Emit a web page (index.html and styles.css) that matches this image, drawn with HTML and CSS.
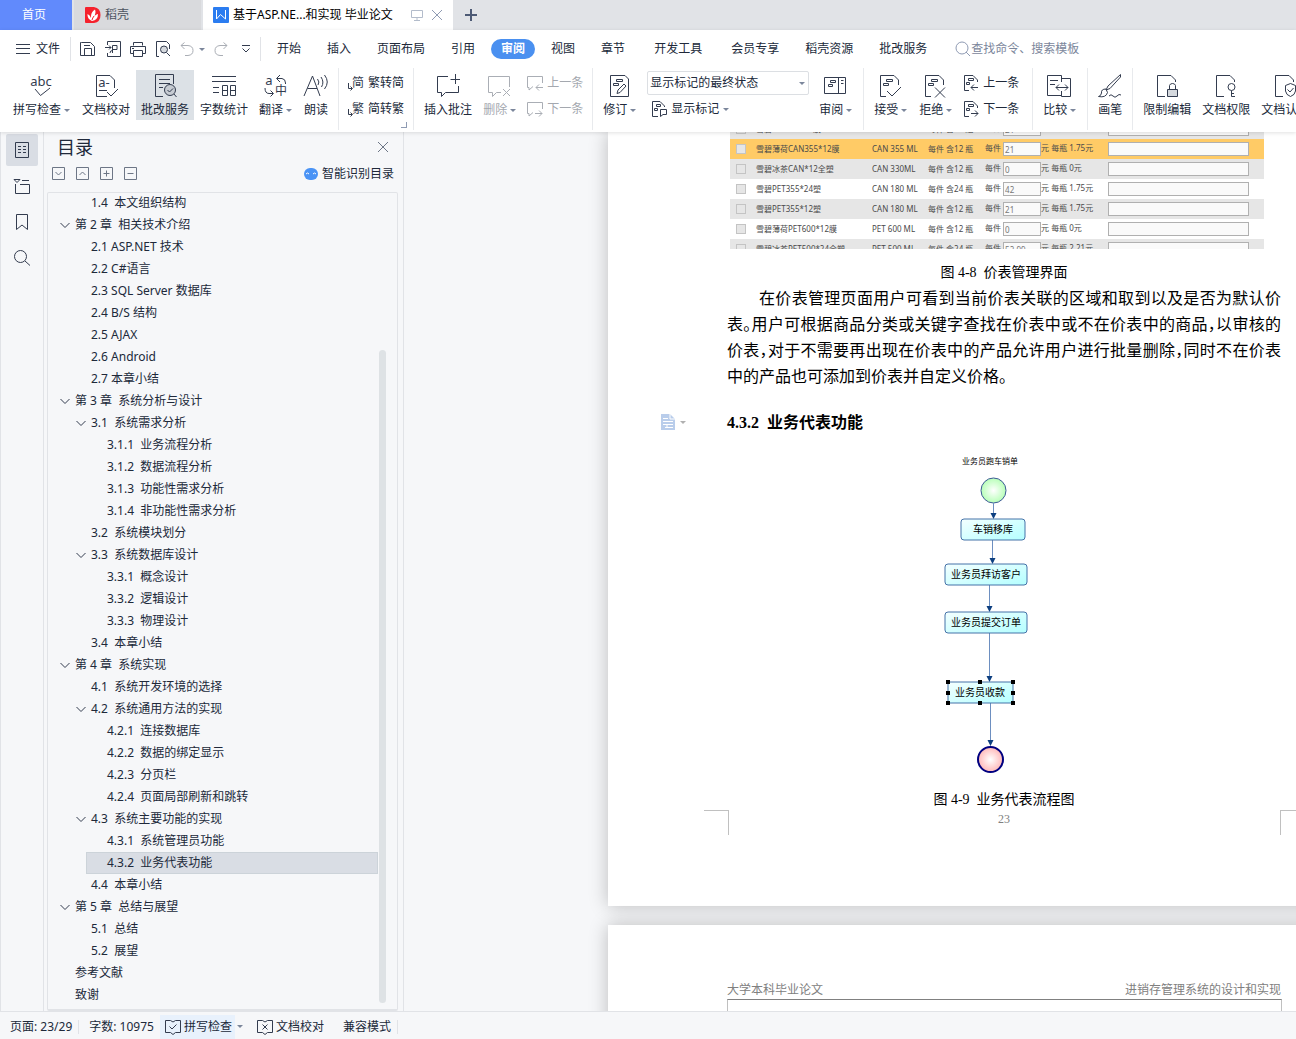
FILE: index.html
```html
<!DOCTYPE html>
<html lang="zh-CN">

<head>
  <meta charset="UTF-8">
  <meta name="viewport" content="width=device-width, initial-scale=1.0">
  <title>基于ASP.NET进销存管理系统的设计和实现 毕业论文</title>
  <link rel="stylesheet" href="styles.css">
</head>

<body>
  <!-- Shared icon shapes -->
  <svg class="symbols" width="0" height="0" aria-hidden="true">
    <symbol id="i-page" viewBox="0 0 24 24">
      <path d="M8 22.500H2.500V1.500H16L20.500 6V11" />
      <path d="M8.500 5.500h6v2h-6zM5.500 9.500h5v2h-5z" />
    </symbol>
    <symbol id="i-lockpage" viewBox="0 0 24 24">
      <path d="M10 22.500H2.500V1.500H16L20.500 6V8" />
    </symbol>
    <symbol id="i-prev" viewBox="0 0 16 16">
      <path d="M6 15.500H1.500V.500H10L14.500 5V7M5.500 3.500h5v2h-5zM3.500 7.500h3v2h-3zM15 12.500H8M11 9.500L8 12.500L11 15.500" />
    </symbol>
    <symbol id="i-next" viewBox="0 0 16 16">
      <path d="M6 15.500H1.500V.500H10L14.500 5V7M5.500 3.500h5v2h-5zM3.500 7.500h3v2h-3zM8 12.500H15M12 9.500L15 12.500L12 15.500" />
    </symbol>
    <symbol id="i-chevron" viewBox="0 0 16 16">
      <path d="M1.500 6L6 10.500L10.500 6" />
    </symbol>
  </svg>

  <!-- Window tabs -->
  <nav class="tabs">
    <a class="tab tab-home" href="#">首页</a>
    <a class="tab tab-docer" href="#">
      <svg width="16" height="16" viewBox="0 0 16 16">
        <path d="M1 0H9Q15.500 1 15.500 8T9 16H1Q0 16 0 15V1Q0 0 1 0Z" fill="#f5222d" />
        <path d="M7 14Q2 12 2.500 7Q5 8 6 11Q5.500 5 10 2.500Q11.500 6 8.500 11Q10 7.500 13 7Q13 13 7 14Z" fill="#fff" />
        <path d="M7 13Q7.500 11 9 9" fill="none" stroke="#f5222d" />
      </svg>
      稻壳
    </a>
    <a class="tab tab-active" href="#">
      <svg width="16" height="16" viewBox="0 0 16 16">
        <rect width="16" height="16" rx="1" fill="#2b7cf0" />
        <path d="M3.500 3V12L7.500 7.500L12.500 12V3" fill="none" stroke="#fff" />
      </svg>
      <span class="tab-title">基于ASP.NE...和实现 毕业论文</span>
      <svg class="tab-screen" width="12" height="12" viewBox="0 0 12 12"><path d="M.500 1.500h11v7h-11zM6 8.500v2.500M3 11.500h6" /></svg>
      <svg class="tab-close" width="12" height="12" viewBox="0 0 12 12"><path d="M1 1L11 11M11 1L1 11" /></svg>
    </a>
    <button class="tab-add" aria-label="新建">
      <svg width="12" height="12" viewBox="0 0 12 12"><path d="M6 0V12M0 6H12" stroke="#4d5a75" stroke-width="2" /></svg>
    </button>
  </nav>

  <header class="top">
    <!-- Menu row -->
    <div class="menu">
      <button class="file">
        <svg width="14" height="10" viewBox="0 0 14 10"><path d="M0 .500H14M0 4.500H14M0 9.500H14" /></svg>
        文件
      </button>
      <div class="quick">
        <button aria-label="保存"><svg width="16" height="16" viewBox="0 0 16 16"><path d="M1.500 1.500H10.500L14.500 5.500V14.500H.500V1.500zM4.500 14V7.500H11.500V14M4 4.500H10" /></svg></button>
        <button aria-label="输出为PDF"><svg width="16" height="16" viewBox="0 0 16 16"><path d="M2.500 4V.500H15.500V15.500H2.500V12M0 6.500H6M4 4.500L6 6.500L4 8.500M7.500 12V4.500H12V8.500H7.500M5 12Q5 9.500 7.500 9.500" /></svg></button>
        <button aria-label="打印"><svg width="16" height="16" viewBox="0 0 16 16"><path d="M3.500 4.500V1.500H12.500V4.500M3 12.500H.500V5.500H15.500V12.500H13M3.500 9.500H12.500V15.500H3.500zM2 7.500H4" /></svg></button>
        <button aria-label="打印预览"><svg width="16" height="16" viewBox="0 0 16 16"><path d="M4 15.500H1.500V.500H11.500L14.500 3.500V8" /><circle cx="9" cy="8.500" r="3.500" fill="#d5d9de" /><path d="M11.500 11.500L15 15" /></svg></button>
        <button class="faded" aria-label="撤销"><svg width="14" height="16" viewBox="0 0 14 16"><path d="M4.500 1.500L1 4.500L4.500 8M1 4.500H8Q13 5 13 9.500T8 14.500H5" /></svg><i class="caret"></i></button>
        <button class="faded" aria-label="恢复"><svg width="14" height="16" viewBox="0 0 14 16"><path d="M9.500 1.500L13 4.500L9.500 8M13 4.500H6Q1 5 1 9.500T6 14.500H9" /></svg></button>
        <button class="more" aria-label="自定义"><svg width="8" height="8" viewBox="0 0 8 8"><path d="M0 .500H8M.500 3.500L4 7L7.500 3.500" /></svg></button>
      </div>
      <nav class="menu-tabs">
        <a href="#">开始</a>
        <a href="#">插入</a>
        <a href="#">页面布局</a>
        <a href="#">引用</a>
        <a href="#" class="current">审阅</a>
        <a href="#">视图</a>
        <a href="#">章节</a>
        <a href="#" class="apart">开发工具</a>
        <a href="#" class="apart">会员专享</a>
        <a href="#">稻壳资源</a>
        <a href="#">批改服务</a>
      </nav>
      <label class="search">
        <svg width="16" height="16" viewBox="0 0 16 16"><circle cx="7" cy="7" r="6" /><path d="M11 11L15 15" /></svg>
        <input type="text" placeholder="查找命令、搜索模板">
      </label>
    </div>

    <!-- Ribbon -->
    <div class="ribbon">
      <div class="group">
        <button class="tool drop">
          <svg width="24" height="24" viewBox="0 0 24 24"><text x="12" y="12" class="glyph">abc</text><path d="M6 15L11.500 21.500L21 14" /></svg>
          <span>拼写检查<i class="caret"></i></span>
        </button>
        <button class="tool">
          <svg width="24" height="24" viewBox="0 0 24 24"><text x="10" y="13" class="glyph">a-</text><path d="M13 22.500H2.500V1.500H16L20.500 6V14M5 16.500H13M13 18L17 22L24 15" /></svg>
          <span>文档校对</span>
        </button>
        <button class="tool pressed">
          <svg width="24" height="24" viewBox="0 0 24 24"><path d="M10 22.500H2.500V.500H20.500V10M6 5.500H17M6 9.500H17M6 13.500H10" /><circle cx="17" cy="16" r="5.500" fill="#c6cbd2" /><path d="M21 20L23.500 23M14.500 16L16.500 18L20 14.500" /></svg>
          <span>批改服务</span>
        </button>
        <button class="tool">
          <svg width="24" height="24" viewBox="0 0 24 24"><path d="M0 2.500H24M0 7.500H24M1 13.500H7M1 18.500H7M10.500 11.500H15.500V21.500H10.500zM10.500 16.500H15.500M18.500 11.500H23.500V21.500H18.500zM18.500 16.500H23.500" /></svg>
          <span>字数统计</span>
        </button>
        <button class="tool drop">
          <svg width="24" height="24" viewBox="0 0 24 24"><text x="6" y="11" class="glyph">a</text><text x="18" y="21" class="glyph cjk">中</text><path d="M17 1L13.500 4.500L17 8M14 4.500H19Q22.500 5 22.500 9V10M2 14Q2 19.500 6 19.500H10M7.500 16.500L10.500 19.500L7.500 22.500" /></svg>
          <span>翻译<i class="caret"></i></span>
        </button>
        <button class="tool">
          <svg width="24" height="24" viewBox="0 0 24 24"><path d="M0 22L8.500 2L16 22M3.500 14.500H13M13.500 5Q16 8 14 11M17 3Q20.500 8 17.500 13M20.500 1Q26 8 20.500 15" /></svg>
          <span>朗读</span>
        </button>
      </div>
      <div class="group corner">
        <div class="stack">
          <button class="small"><svg width="16" height="16" viewBox="0 0 16 16"><text x="10" y="12" class="glyph cjk">简</text><path d="M.500 8V13.500H4M2.500 11.500L4.500 13.500L2.500 15.500" /></svg>繁转简</button>
          <button class="small"><svg width="16" height="16" viewBox="0 0 16 16"><text x="10" y="12" class="glyph cjk">繁</text><path d="M.500 8V13.500H4M2.500 11.500L4.500 13.500L2.500 15.500" /></svg>简转繁</button>
        </div>
      </div>
      <div class="group">
        <button class="tool">
          <svg width="24" height="24" viewBox="0 0 24 24"><path d="M12 2.500H1.500V18.500H5.500V22.500L9.500 18.500H22.500V12M19.500 0V10M14.500 5.500H24" /></svg>
          <span>插入批注</span>
        </button>
        <button class="tool drop faded">
          <svg width="24" height="24" viewBox="0 0 24 24"><path d="M14 18.500H9.500L5.500 22.500V18.500H1.500V2.500H22.500V13M16 15L23 22M23 15L16 22" /></svg>
          <span>删除<i class="caret"></i></span>
        </button>
        <div class="stack">
          <button class="small faded"><svg width="16" height="16" viewBox="0 0 16 16"><path d="M6 11.500L2 15V12.500H.500V1.500H15.500V8M16 12.500H9M12 9.500L9 12.500L12 15.500" /></svg>上一条</button>
          <button class="small faded"><svg width="16" height="16" viewBox="0 0 16 16"><path d="M6 11.500L2 15V12.500H.500V1.500H15.500V8M8 12.500H15M12 9.500L15 12.500L12 15.500" /></svg>下一条</button>
        </div>
      </div>
      <div class="group">
        <button class="tool drop">
          <svg width="24" height="24" viewBox="0 0 24 24"><path d="M3.500 1.500H18L21.500 5V22.500H3.500zM9.500 5.500h6v2h-6zM6.500 9.500h5v2h-5zM10 19.500L11 16L17 10L19 12L13 18.500z" /></svg>
          <span>修订<i class="caret"></i></span>
        </button>
        <div class="stack">
          <label class="state">
            <select aria-label="标记状态">
              <option>显示标记的最终状态</option>
              <option>最终状态</option>
              <option>原始状态</option>
            </select>
            <i class="caret"></i>
          </label>
          <button class="small marks"><svg width="16" height="16" viewBox="0 0 16 16"><path d="M7 15.500H1.500V.500H9L13.500 5V6M5.500 3.500h4v2h-4zM3.500 7.500h3v2h-3zM9.500 8.500H15.500V13.500H12L9.500 15.500z" /></svg>显示标记<i class="caret"></i></button>
        </div>
        <button class="tool drop">
          <svg width="24" height="24" viewBox="0 0 24 24"><path d="M1.500 3.500H22.500V19.500H1.500zM15.500 3.500V19.500M7.500 6.500H12.500V8.500H7.500zM5.500 10.500H9.500V12.500H5.500zM18 6.500H20.500M18 9.500H20.500" /></svg>
          <span>审阅<i class="caret"></i></span>
        </button>
      </div>
      <div class="group loose">
        <button class="tool drop">
          <svg width="24" height="24" viewBox="0 0 24 24"><use href="#i-page" /><path d="M9 17L14 22L23 13" /></svg>
          <span>接受<i class="caret"></i></span>
        </button>
        <button class="tool drop">
          <svg width="24" height="24" viewBox="0 0 24 24"><use href="#i-page" /><path d="M12 13.500L22 23.500M22 13.500L12 23.500" /></svg>
          <span>拒绝<i class="caret"></i></span>
        </button>
        <div class="stack">
          <button class="small"><svg width="16" height="16"><use href="#i-prev" /></svg>上一条</button>
          <button class="small"><svg width="16" height="16"><use href="#i-next" /></svg>下一条</button>
        </div>
      </div>
      <div class="group">
        <button class="tool drop">
          <svg width="24" height="24" viewBox="0 0 24 24"><path d="M14 21.500H.500V1.500H14.500V8M14.500 4.500H23.500V22.500H14.500V17M3 6.500H11M3 10.500H8M9 13.500H21M12 10.500L9 13.500L12 16.500M18 10.500L21 13.500L18 16.500" /></svg>
          <span>比较<i class="caret"></i></span>
        </button>
      </div>
      <div class="group">
        <button class="tool">
          <svg width="24" height="24" viewBox="0 0 24 24"><path d="M22.500 .500L10 12L8 16L12 14.500L22.500 3zM8 15Q3 15 3.500 19Q3 22 .500 22.500Q8 24 9.500 18.500L8 15M11 22Q13 19.500 15 22T19 22T23 21" /></svg>
          <span>画笔</span>
        </button>
      </div>
      <div class="group last">
        <button class="tool">
          <svg width="24" height="24" viewBox="0 0 24 24"><use href="#i-lockpage" /><path d="M14.500 15V11.500Q15 9.500 17.500 9.500T20.500 11.500V15" /><path d="M12.500 15.500h10v7h-10z" fill="#d5d9de" /></svg>
          <span>限制编辑</span>
        </button>
        <button class="tool">
          <svg width="24" height="24" viewBox="0 0 24 24"><use href="#i-lockpage" /><circle cx="17.500" cy="13" r="3.500" /><path d="M17.500 16.500V22.500H21M17.500 19.500H20" /></svg>
          <span>文档权限</span>
        </button>
        <button class="tool">
          <svg width="24" height="24" viewBox="0 0 24 24"><use href="#i-lockpage" /><path d="M17.500 9.500L22.500 11.500V17Q22 21 17.500 22.500Q13 21 12.500 17V11.500zM14.500 15.500L17 18L20.500 14" /></svg>
          <span>文档认证</span>
        </button>
      </div>
    </div>
  </header>

  <main class="work">
    <!-- Left rail -->
    <nav class="rail">
      <button class="on" aria-label="目录"><svg width="16" height="16" viewBox="0 0 16 16"><path d="M1.500 .500H14.500V15.500H1.500zM4 4.500H7M9 4.500H12M4 7.500H7M9 7.500H12M4 10.500H7M9 10.500H12" /></svg></button>
      <button aria-label="章节"><svg width="16" height="16" viewBox="0 0 16 16"><path d="M0 1.500H6L3 4.500zM8 2.500H15M1.500 6V15.500H15.500V6.500H6" /></svg></button>
      <button aria-label="书签"><svg width="16" height="16" viewBox="0 0 16 16"><path d="M2.500 .500H13.500V15.500L8 11L2.500 15.500z" /></svg></button>
      <button aria-label="查找"><svg width="16" height="16" viewBox="0 0 16 16"><circle cx="6.500" cy="6.500" r="6" /><path d="M11 11L16 15.500" /></svg></button>
    </nav>

    <!-- Outline pane -->
    <aside class="outline">
      <div class="outline-head">
        <h2>目录</h2>
        <button aria-label="关闭"><svg width="10" height="10" viewBox="0 0 10 10"><path d="M0 0L10 10M10 0L0 10" /></svg></button>
      </div>
      <div class="outline-tools">
        <button aria-label="展开"><svg width="14" height="14" viewBox="0 0 14 14"><path d="M.500 .500h12v12h-12zM3.500 5L6.500 8L9.500 5" /></svg></button>
        <button aria-label="收起"><svg width="14" height="14" viewBox="0 0 14 14"><path d="M.500 .500h12v12h-12zM3.500 8L6.500 5L9.500 8" /></svg></button>
        <button aria-label="增加级别"><svg width="14" height="14" viewBox="0 0 14 14"><path d="M.500 .500h12v12h-12zM3.500 6.500H9.500M6.500 3.500V9.500" /></svg></button>
        <button aria-label="减少级别"><svg width="14" height="14" viewBox="0 0 14 14"><path d="M.500 .500h12v12h-12zM3.500 6.500H9.500" /></svg></button>
        <button class="smart">
          <svg width="14" height="12" viewBox="0 0 14 12"><rect width="14" height="12" rx="6" fill="#4a93f5" stroke="none" /><path d="M2 6Q3.500 4 5 6M9 6Q10.500 4 12 6" stroke="#fff" /></svg>
          智能识别目录
        </button>
      </div>
      <div class="outline-list">
        <ul>
          <li class="l2"><a href="#">1.4  本文组织结构</a></li>
          <li class="l1"><svg><use href="#i-chevron" /></svg><a href="#">第 2 章  相关技术介绍</a></li>
          <li class="l2"><a href="#">2.1 ASP.NET 技术</a></li>
          <li class="l2"><a href="#">2.2 C#语言</a></li>
          <li class="l2"><a href="#">2.3 SQL Server 数据库</a></li>
          <li class="l2"><a href="#">2.4 B/S 结构</a></li>
          <li class="l2"><a href="#">2.5 AJAX</a></li>
          <li class="l2"><a href="#">2.6 Android</a></li>
          <li class="l2"><a href="#">2.7 本章小结</a></li>
          <li class="l1"><svg><use href="#i-chevron" /></svg><a href="#">第 3 章  系统分析与设计</a></li>
          <li class="l2"><svg><use href="#i-chevron" /></svg><a href="#">3.1  系统需求分析</a></li>
          <li class="l3"><a href="#">3.1.1  业务流程分析</a></li>
          <li class="l3"><a href="#">3.1.2  数据流程分析</a></li>
          <li class="l3"><a href="#">3.1.3  功能性需求分析</a></li>
          <li class="l3"><a href="#">3.1.4  非功能性需求分析</a></li>
          <li class="l2"><a href="#">3.2  系统模块划分</a></li>
          <li class="l2"><svg><use href="#i-chevron" /></svg><a href="#">3.3  系统数据库设计</a></li>
          <li class="l3"><a href="#">3.3.1  概念设计</a></li>
          <li class="l3"><a href="#">3.3.2  逻辑设计</a></li>
          <li class="l3"><a href="#">3.3.3  物理设计</a></li>
          <li class="l2"><a href="#">3.4  本章小结</a></li>
          <li class="l1"><svg><use href="#i-chevron" /></svg><a href="#">第 4 章  系统实现</a></li>
          <li class="l2"><a href="#">4.1  系统开发环境的选择</a></li>
          <li class="l2"><svg><use href="#i-chevron" /></svg><a href="#">4.2  系统通用方法的实现</a></li>
          <li class="l3"><a href="#">4.2.1  连接数据库</a></li>
          <li class="l3"><a href="#">4.2.2  数据的绑定显示</a></li>
          <li class="l3"><a href="#">4.2.3  分页栏</a></li>
          <li class="l3"><a href="#">4.2.4  页面局部刷新和跳转</a></li>
          <li class="l2"><svg><use href="#i-chevron" /></svg><a href="#">4.3  系统主要功能的实现</a></li>
          <li class="l3"><a href="#">4.3.1  系统管理员功能</a></li>
          <li class="l3 selected"><a href="#">4.3.2  业务代表功能</a></li>
          <li class="l2"><a href="#">4.4  本章小结</a></li>
          <li class="l1"><svg><use href="#i-chevron" /></svg><a href="#">第 5 章  总结与展望</a></li>
          <li class="l2"><a href="#">5.1  总结</a></li>
          <li class="l2"><a href="#">5.2  展望</a></li>
          <li class="l1"><a href="#">参考文献</a></li>
          <li class="l1"><a href="#">致谢</a></li>
        </ul>
        <div class="scroll-thumb"></div>
      </div>
    </aside>

    <!-- Document -->
    <section class="canvas">
      <article class="page">
        <div class="price-shot">
          <table>
            <colgroup><col class="c-check"><col class="c-name"><col class="c-spec"><col class="c-pack"><col class="c-price"><col></colgroup>
            <tr class="odd"><td><input type="checkbox" aria-label="选择"></td><td>雪碧PET355*12膜</td><td>CAN 355 ML</td><td>每件 含12 瓶</td><td>每件 <input type="text" class="price" aria-label="价格" value="21">元 每瓶 1.75元</td><td><input type="text" class="note" aria-label="备注"></td></tr>
            <tr class="picked"><td><input type="checkbox" aria-label="选择"></td><td>雪碧薄荷CAN355*12膜</td><td>CAN 355 ML</td><td>每件 含12 瓶</td><td>每件 <input type="text" class="price" aria-label="价格" value="21">元 每瓶 1.75元</td><td><input type="text" class="note" aria-label="备注"></td></tr>
            <tr class="odd"><td><input type="checkbox" aria-label="选择"></td><td>雪碧冰茶CAN*12全塑</td><td>CAN 330ML</td><td>每件 含12 瓶</td><td>每件 <input type="text" class="price" aria-label="价格" value="0">元 每瓶 0元</td><td><input type="text" class="note" aria-label="备注"></td></tr>
            <tr><td><input type="checkbox" aria-label="选择"></td><td>雪碧PET355*24塑</td><td>CAN 180 ML</td><td>每件 含24 瓶</td><td>每件 <input type="text" class="price" aria-label="价格" value="42">元 每瓶 1.75元</td><td><input type="text" class="note" aria-label="备注"></td></tr>
            <tr class="odd"><td><input type="checkbox" aria-label="选择"></td><td>雪碧PET355*12塑</td><td>CAN 180 ML</td><td>每件 含12 瓶</td><td>每件 <input type="text" class="price" aria-label="价格" value="21">元 每瓶 1.75元</td><td><input type="text" class="note" aria-label="备注"></td></tr>
            <tr><td><input type="checkbox" aria-label="选择"></td><td>雪碧薄荷PET600*12膜</td><td>PET 600 ML</td><td>每件 含12 瓶</td><td>每件 <input type="text" class="price" aria-label="价格" value="0">元 每瓶 0元</td><td><input type="text" class="note" aria-label="备注"></td></tr>
            <tr class="odd"><td><input type="checkbox" aria-label="选择"></td><td>雪碧冰茶PET500*24全塑</td><td>PET 500 ML</td><td>每件 含24 瓶</td><td>每件 <input type="text" class="price" aria-label="价格" value="52.99">元 每瓶 2.21元</td><td><input type="text" class="note" aria-label="备注"></td></tr>
          </table>
        </div>
        <p class="caption">图 4-8  价表管理界面</p>
        <p class="body-text">在价表管理页面用户可看到当前价表关联的区域和取到以及是否为默认价表。用户可根据商品分类或关键字查找在价表中或不在价表中的商品，以审核的价表，对于不需要再出现在价表中的产品允许用户进行批量删除，同时不在价表中的产品也可添加到价表并自定义价格。</p>
        <div class="heading">
          <span class="para-tool"><svg width="14" height="16" viewBox="0 0 14 16"><path d="M0 0H9L14 5V16H0z" fill="#b9cdeb" /><path d="M2 4.500H7M2 7.500H12M2 10.500H12M6 10.500V13.500M4 13.500H12M9 0V5H14" fill="none" stroke="#fff" /></svg><i class="caret"></i></span>
          <h3>4.3.2  业务代表功能</h3>
        </div>

        <svg class="flow" width="128" height="330" viewBox="0 0 128 330">
          <defs>
            <linearGradient id="box" x1="0" y1="0" x2="1" y2="1"><stop offset="0" stop-color="#f4ffff" /><stop offset="1" stop-color="#b4ffff" /></linearGradient>
            <radialGradient id="start"><stop offset="0" stop-color="#fff" /><stop offset="1" stop-color="#b8ffb8" /></radialGradient>
            <radialGradient id="end"><stop offset="0" stop-color="#fff" /><stop offset="1" stop-color="#ffb8b8" /></radialGradient>
          </defs>
          <text x="50" y="15" class="flow-title">业务员跑车销单</text>
          <circle cx="53.500" cy="41.500" r="12.500" fill="url(#start)" stroke="#3c5a96" />
          <path class="line" d="M53.500 54V66M52.500 91V112M49.500 136V158M49.500 184V228M50.500 254V292" />
          <path class="head" d="M50.500 64h6l-3 6zM49.500 109h6l-3 6zM46.500 157h6l-3 6zM46.500 227h6l-3 6zM47.500 291h6l-3 6z" />
          <g class="box">
            <rect x="21" y="70" width="64" height="21" rx="3" />
            <rect x="5" y="115" width="82" height="21" rx="3" />
            <rect x="5" y="163" width="82" height="21" rx="3" />
            <rect x="8" y="233" width="65" height="21" />
          </g>
          <text x="53" y="84">车销移库</text>
          <text x="46" y="129">业务员拜访客户</text>
          <text x="46" y="177">业务员提交订单</text>
          <text x="40" y="247">业务员收款</text>
          <path d="M6 231h4v4h-4zM38 231h4v4h-4zM71 231h4v4h-4zM6 242h4v4h-4zM71 242h4v4h-4zM6 252h4v4h-4zM38 252h4v4h-4zM71 252h4v4h-4z" />
          <circle cx="50.500" cy="310.500" r="12.500" fill="url(#end)" stroke="#000080" stroke-width="2" />
        </svg>

        <p class="caption flow-caption">图 4-9  业务代表流程图</p>
        <footer>23</footer>
      </article>

      <article class="page next-page">
        <div class="page-head"><span>大学本科毕业论文</span><span>进销存管理系统的设计和实现</span></div>
      </article>
    </section>
  </main>

  <!-- Status bar -->
  <footer class="status">
    <span class="cell">页面: 23/29</span>
    <span class="cell words">字数: 10975</span>
    <button class="spell"><svg width="16" height="16" viewBox="0 0 16 16"><path d="M5.500 1.500H.500V13.500H5.500L8 15.500L10.500 13.500H15.500V1.500H10.500L8 3zM4.500 7.500L7 10L11.500 5.500" /></svg>拼写检查</button>
    <i class="caret"></i>
    <button class="proof"><svg width="16" height="16" viewBox="0 0 16 16"><path d="M5.500 1.500H.500V13.500H5.500L8 15.500L10.500 13.500H15.500V1.500H10.500L8 3zM5.500 5.500L10.500 10.500M10.500 5.500L5.500 10.500" /></svg>文档校对</button>
    <span class="cell mode">兼容模式</span>
  </footer>
</body>

</html>
```
FILE: styles.css
```css
* {
  box-sizing: border-box;
}

body {
  margin: 0;
  height: 100vh;
  display: flex;
  flex-direction: column;
  overflow: hidden;
  background-color: #f6f7f9;
  color: #20293a;
  font-family: "Noto Sans", "Noto Sans CJK SC", sans-serif;
  font-size: 12px;
  line-height: 16px;
}

.symbols {
  position: absolute;
}

a {
  color: inherit;
  text-decoration: none;
}

button {
  display: flex;
  align-items: center;
  padding: 0;
  border: none;
  background: none;
  color: inherit;
  font: inherit;
  white-space: nowrap;
  cursor: pointer;
}

svg {
  flex: none;
  overflow: visible;
}

.tabs svg,
.top svg,
.rail svg,
.outline svg,
.status svg {
  fill: none;
  stroke: #333c4f;
}

.caret {
  flex: none;
  display: inline-block;
  border: 3px solid transparent;
  border-top: 3px solid #7b869b;
  border-bottom: none;
}

/* Window tabs */
.tabs {
  flex: none;
  display: flex;
  gap: 2px;
  height: 30px;
  background-color: #e1e3e7;
}

.tab {
  display: flex;
  align-items: center;
}

.tab svg {
  stroke: none;
}

.tab-home {
  width: 72px;
  padding-left: 22px;
  background-color: #618afc;
  color: white;
}

.tab-docer {
  width: 127px;
  gap: 4px;
  padding-left: 11px;
  background-color: #d9dadd;
  color: #4c535f;
}

.tab-active {
  width: 250px;
  padding: 0 10px;
  background-color: white;
  color: black;
}

.tab-title {
  flex: 1;
  margin-left: 4px;
  white-space: nowrap;
}

.tab .tab-screen {
  margin-right: 8px;
  stroke: #b3bccb;
}

.tab .tab-close {
  stroke: #8f9bb3;
}

.tab-add {
  padding: 0 10px;
}

/* Menu row */
.top {
  flex: none;
  position: relative;
  z-index: 1;
  background-color: white;
  box-shadow: 0 1px 4px rgba(0, 0, 0, 0.12);
}

.menu {
  display: flex;
  align-items: center;
  height: 38px;
  padding-left: 16px;
}

.file {
  gap: 6px;
  height: 24px;
  padding-right: 10px;
  border-right: 1px solid #e1e3e7;
}

.quick {
  display: flex;
  align-items: center;
  gap: 9px;
  height: 24px;
  padding: 0 10px 0 9px;
  border-right: 1px solid #e1e3e7;
}

.quick .caret {
  margin-left: 5px;
}

.quick .more {
  margin-left: 5px;
}

.menu-tabs {
  display: flex;
  gap: 6px;
  margin-left: 6px;
}

.menu-tabs a {
  padding: 2px 10px;
  border-radius: 10px;
  white-space: nowrap;
}

.menu-tabs .apart {
  margin-left: 3px;
}

.menu-tabs .current {
  background-color: #4a90f0;
  color: white;
  font-weight: bold;
}

.search {
  flex: 1;
  display: flex;
  align-items: center;
  margin-left: 18px;
}

.top .search svg {
  stroke: #8f9bb3;
}

.search input {
  flex: 1;
  min-width: 0;
  padding: 0;
  border: none;
  outline: none;
  font: inherit;
}

.search input::placeholder {
  color: #7b869b;
}

/* Ribbon */
.ribbon {
  display: flex;
  height: 64px;
  padding-left: 3px;
  overflow: hidden;
}

.group {
  flex: none;
  display: flex;
  gap: 1px;
  height: 62px;
  padding: 2px 5px 0;
  border-right: 1px solid #e8eaed;
}

.group.loose {
  padding-right: 9px;
}

.group.last {
  border: none;
}

.group.corner {
  position: relative;
}

.group.corner::after {
  content: "";
  position: absolute;
  right: 6px;
  bottom: 2px;
  width: 5px;
  height: 5px;
  border-right: 1px solid #8f9bb3;
  border-bottom: 1px solid #8f9bb3;
}

.tool {
  flex-direction: column;
  gap: 4px;
  height: 50px;
  padding: 4px 5px 2px;
}

.tool.drop {
  margin-right: 2px;
}

.tool span {
  display: flex;
  align-items: center;
  gap: 3px;
}

.tool .caret {
  margin-right: -1px;
}

.pressed {
  background-color: #dce1e6;
}

.faded {
  color: #a4a8af;
}

.top .faded svg {
  stroke: #aaaeb5;
}

.glyph {
  fill: #333c4f;
  stroke: none;
  font-size: 13px;
  text-anchor: middle;
}

.glyph.cjk {
  font-size: 12px;
}

.stack {
  display: flex;
  flex-direction: column;
  gap: 2px;
  margin: 1px 4px 0;
}

.small {
  gap: 4px;
  height: 24px;
}

.marks {
  margin-left: 4px;
}

.state {
  position: relative;
  width: 162px;
  height: 24px;
}

.state select {
  width: 100%;
  height: 24px;
  padding: 0 2px;
  appearance: none;
  border: 1px solid #dcdfe3;
  border-radius: 2px;
  background-color: white;
  color: inherit;
  font: inherit;
}

.state .caret {
  position: absolute;
  top: 11px;
  right: 4px;
}

/* Work area */
.work {
  flex: 1;
  display: flex;
  min-height: 0;
}

.rail {
  flex: none;
  display: flex;
  flex-direction: column;
  gap: 4px;
  width: 44px;
  padding: 2px 5px 0;
  border-left: 1px solid #e1e3e7;
  border-right: 1px solid #e1e3e7;
}

.rail button {
  justify-content: center;
  height: 32px;
  border-radius: 2px;
}

.rail .on {
  background-color: #d9dde4;
}

.outline {
  flex: none;
  display: flex;
  flex-direction: column;
  width: 360px;
  padding: 0 5px 0 3px;
  border-right: 1px solid #e1e3e7;
}

.outline-head {
  display: flex;
  align-items: center;
  justify-content: space-between;
  height: 30px;
  padding: 0 10px;
}

.outline-head h2 {
  margin: 0;
  font-size: 18px;
  font-weight: normal;
}

.outline-head svg,
.outline-tools svg {
  stroke: #6d7686;
}

.outline-tools {
  display: flex;
  align-items: center;
  gap: 10px;
  height: 30px;
  padding: 0 4px 6px 5px;
}

.outline-tools .smart {
  gap: 4px;
  margin-left: auto;
}

.outline-list {
  flex: 1;
  position: relative;
  min-height: 0;
  overflow: hidden;
  border: 1px solid #e1e3e7;
  border-bottom-width: 2px;
  border-radius: 2px;
}

.outline-list ul {
  margin: -1px 19px 0 0;
  padding: 0;
  list-style: none;
}

.outline-list li {
  display: flex;
  align-items: center;
  height: 22px;
  white-space: pre;
}

.outline-list li svg {
  width: 16px;
  height: 16px;
  margin-right: -16px;
}

.outline-list a {
  margin-left: 16px;
}

.outline-list .l1 {
  margin-left: 11px;
}

.outline-list .l2 {
  margin-left: 27px;
}

.outline-list .l3 {
  margin-left: 38px;
  padding-left: 5px;
}

.outline-list .selected {
  background-color: #d9dde4;
  outline: 1px solid #ccd3d9;
  outline-offset: -1px;
}

.scroll-thumb {
  position: absolute;
  top: 157px;
  right: 11px;
  bottom: 6px;
  width: 7px;
  border-radius: 4px;
  background-color: #dee2e5;
}

/* Document */
.canvas {
  flex: 1;
  min-width: 0;
  overflow: hidden;
  padding-left: 204px;
  color: black;
}

.page {
  position: relative;
  width: 794px;
  height: 774px;
  padding: 0 121px 0 119px;
  background-color: white;
  box-shadow: 0 0 18px rgba(0, 0, 0, 0.24);
  font-family: "Liberation Serif", "Noto Sans CJK SC", serif;
}

.price-shot {
  height: 117px;
  width: 534px;
  margin-left: 3px;
  overflow: hidden;
}

.price-shot table {
  width: 100%;
  margin-top: -13px;
  table-layout: fixed;
  border-collapse: collapse;
  color: #4a4a4a;
  font-family: "Noto Sans", "Noto Sans CJK SC", sans-serif;
  font-size: 8px;
  line-height: 12px;
}

.price-shot tr {
  height: 20px;
}

.price-shot td {
  padding: 0;
  white-space: nowrap;
}

.price-shot td:first-child {
  padding-left: 6px;
}

.c-check {
  width: 26px;
}

.c-name {
  width: 116px;
}

.c-spec {
  width: 56px;
}

.c-pack {
  width: 57px;
}

.c-price {
  width: 123px;
}

.price-shot .odd {
  background-color: #e6e6e6;
}

.price-shot .picked {
  background-color: #ffcb66;
}

.price-shot input {
  display: inline-block;
  margin: 0;
  border: 1px solid #b0b0b0;
  border-radius: 0;
  background-color: #fafafa;
  color: #777;
  font: inherit;
  vertical-align: middle;
}

.price-shot input[type="checkbox"] {
  display: block;
  width: 10px;
  height: 10px;
  appearance: none;
  border-color: #c4c4c4;
  background-color: #e6e6e6;
}

.price-shot .price {
  width: 38px;
  height: 14px;
  padding: 0 1px;
}

.price-shot .note {
  width: 141px;
  height: 14px;
}

.caption {
  margin: 11px 0 0;
  font-size: 14px;
  line-height: 26px;
  text-align: center;
  white-space: pre;
}

/* Half-width punctuation keeps 35 characters on a line */
.body-text {
  margin: 0;
  font-size: 16px;
  line-height: 26px;
  text-align: justify;
  text-indent: 32px;
  font-feature-settings: "halt";
}

.heading {
  position: relative;
  margin: 20px 0 13px;
}

.heading h3 {
  margin: 0;
  font-size: 16px;
  line-height: 26px;
  white-space: pre;
}

.para-tool {
  position: absolute;
  top: 4px;
  left: -66px;
  display: flex;
  align-items: center;
  gap: 5px;
}

.para-tool .caret {
  border-top-color: #b0b0b0;
}

.flow {
  display: block;
  margin: 0 auto;
  font-family: "Noto Sans CJK SC", sans-serif;
  font-size: 10px;
  text-anchor: middle;
}

.flow .flow-title {
  font-size: 8px;
}

.flow .line {
  stroke: #6d8fc0;
}

.flow .head {
  fill: #0d3f80;
}

.flow .box {
  fill: url(#box);
  stroke: #4472a8;
}

.flow-caption {
  margin-top: 8px;
}

.page footer {
  color: gray;
  font-size: 12px;
  line-height: 12px;
  text-align: center;
}

/* Corner crop marks */
.page:first-child::before,
.page:first-child::after {
  content: "";
  position: absolute;
  top: 678px;
  width: 24px;
  height: 24px;
  border-top: 1px solid #c0c0c0;
}

.page:first-child::before {
  left: 96px;
  border-right: 1px solid #c0c0c0;
}

.page:first-child::after {
  right: 97px;
  border-left: 1px solid #c0c0c0;
}

.next-page {
  margin-top: 19px;
  padding-top: 57px;
}

.page-head {
  display: flex;
  justify-content: space-between;
  color: gray;
}

.page-head::after {
  content: "";
  position: absolute;
  top: 74px;
  left: 119px;
  right: 120px;
  height: 400px;
  border: 1px solid #c0c0c0;
  border-top-color: gray;
}

/* Status bar */
.status {
  flex: none;
  position: relative;
  z-index: 1;
  display: flex;
  align-items: center;
  height: 28px;
  padding: 2px 0 0 10px;
  border-top: 1px solid #e1e3e7;
  background-color: #f6f7f9;
}

.status .cell {
  padding-right: 6px;
  border-right: 1px solid #e1e3e7;
  line-height: 14px;
}

.status .words {
  margin-left: 10px;
  border: none;
}

.status button {
  gap: 3px;
  height: 24px;
  padding: 0 3px;
}

.status .spell {
  padding-left: 5px;
  margin-right: 2px;
  background-color: #e8f1fc;
}

.status .proof {
  margin-left: 4px;
  padding-left: 10px;
}

.status .mode {
  margin-left: 16px;
}
```
